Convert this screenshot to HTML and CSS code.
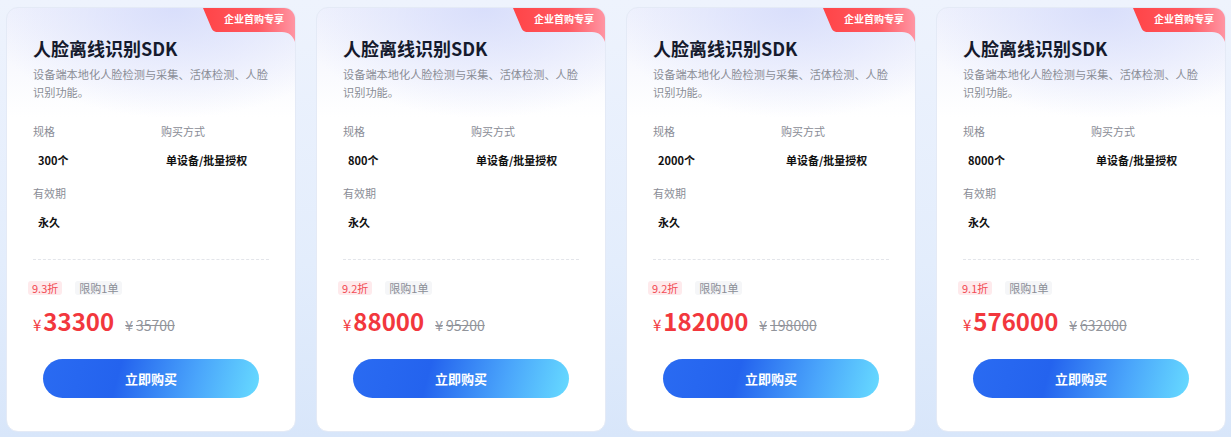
FILE: index.html
```
<!DOCTYPE html>
<html lang="zh-CN">
<head>
    <meta charset="UTF-8">
    <meta name="viewport" content="width=device-width, initial-scale=1.0">
    <title>人脸离线识别SDK</title>
    <link rel="stylesheet" href="styles.css">
</head>
<body>
    <section class="cards">
        <div class="card">
            <div class="badge">
                <svg viewBox="0 0 92 34" width="92" height="34">
                    <defs>
                        <linearGradient id="bg1" x1="0" y1="0" x2="1" y2="0">
                            <stop offset="0" stop-color="#ff4447"/>
                            <stop offset="0.6" stop-color="#ff5a62"/>
                            <stop offset="1" stop-color="#ff95a3"/>
                        </linearGradient>
                    </defs>
                    <path d="M0 0 H92 V34 C90 28 86 24 79 24 H15 C11 24 9 22 8 19 Z" fill="url(#bg1)"/>
                </svg>
                <span>企业首购专享</span>
            </div>
            <h2 class="title">人脸离线识别SDK</h2>
            <p class="desc">设备端本地化人脸检测与采集、活体检测、人脸识别功能。</p>
            <div class="specs">
                <div class="spec"><div class="label">规格</div><div class="value">300个</div></div>
                <div class="spec"><div class="label">购买方式</div><div class="value">单设备/批量授权</div></div>
                <div class="spec"><div class="label">有效期</div><div class="value">永久</div></div>
            </div>
            <div class="line"></div>
            <div class="tags"><span class="tag off">9.3折</span><span class="tag limit">限购1单</span></div>
            <div class="price"><span class="yen">¥</span><span class="num">33300</span><span class="old"><i>¥</i>35700</span></div>
            <a href="#" class="buy">立即购买</a>
        </div>
        <div class="card">
            <div class="badge">
                <svg viewBox="0 0 92 34" width="92" height="34">
                    <defs>
                        <linearGradient id="bg2" x1="0" y1="0" x2="1" y2="0">
                            <stop offset="0" stop-color="#ff4447"/>
                            <stop offset="0.6" stop-color="#ff5a62"/>
                            <stop offset="1" stop-color="#ff95a3"/>
                        </linearGradient>
                    </defs>
                    <path d="M0 0 H92 V34 C90 28 86 24 79 24 H15 C11 24 9 22 8 19 Z" fill="url(#bg2)"/>
                </svg>
                <span>企业首购专享</span>
            </div>
            <h2 class="title">人脸离线识别SDK</h2>
            <p class="desc">设备端本地化人脸检测与采集、活体检测、人脸识别功能。</p>
            <div class="specs">
                <div class="spec"><div class="label">规格</div><div class="value">800个</div></div>
                <div class="spec"><div class="label">购买方式</div><div class="value">单设备/批量授权</div></div>
                <div class="spec"><div class="label">有效期</div><div class="value">永久</div></div>
            </div>
            <div class="line"></div>
            <div class="tags"><span class="tag off">9.2折</span><span class="tag limit">限购1单</span></div>
            <div class="price"><span class="yen">¥</span><span class="num">88000</span><span class="old"><i>¥</i>95200</span></div>
            <a href="#" class="buy">立即购买</a>
        </div>
        <div class="card">
            <div class="badge">
                <svg viewBox="0 0 92 34" width="92" height="34">
                    <defs>
                        <linearGradient id="bg3" x1="0" y1="0" x2="1" y2="0">
                            <stop offset="0" stop-color="#ff4447"/>
                            <stop offset="0.6" stop-color="#ff5a62"/>
                            <stop offset="1" stop-color="#ff95a3"/>
                        </linearGradient>
                    </defs>
                    <path d="M0 0 H92 V34 C90 28 86 24 79 24 H15 C11 24 9 22 8 19 Z" fill="url(#bg3)"/>
                </svg>
                <span>企业首购专享</span>
            </div>
            <h2 class="title">人脸离线识别SDK</h2>
            <p class="desc">设备端本地化人脸检测与采集、活体检测、人脸识别功能。</p>
            <div class="specs">
                <div class="spec"><div class="label">规格</div><div class="value">2000个</div></div>
                <div class="spec"><div class="label">购买方式</div><div class="value">单设备/批量授权</div></div>
                <div class="spec"><div class="label">有效期</div><div class="value">永久</div></div>
            </div>
            <div class="line"></div>
            <div class="tags"><span class="tag off">9.2折</span><span class="tag limit">限购1单</span></div>
            <div class="price"><span class="yen">¥</span><span class="num">182000</span><span class="old"><i>¥</i>198000</span></div>
            <a href="#" class="buy">立即购买</a>
        </div>
        <div class="card">
            <div class="badge">
                <svg viewBox="0 0 92 34" width="92" height="34">
                    <defs>
                        <linearGradient id="bg4" x1="0" y1="0" x2="1" y2="0">
                            <stop offset="0" stop-color="#ff4447"/>
                            <stop offset="0.6" stop-color="#ff5a62"/>
                            <stop offset="1" stop-color="#ff95a3"/>
                        </linearGradient>
                    </defs>
                    <path d="M0 0 H92 V34 C90 28 86 24 79 24 H15 C11 24 9 22 8 19 Z" fill="url(#bg4)"/>
                </svg>
                <span>企业首购专享</span>
            </div>
            <h2 class="title">人脸离线识别SDK</h2>
            <p class="desc">设备端本地化人脸检测与采集、活体检测、人脸识别功能。</p>
            <div class="specs">
                <div class="spec"><div class="label">规格</div><div class="value">8000个</div></div>
                <div class="spec"><div class="label">购买方式</div><div class="value">单设备/批量授权</div></div>
                <div class="spec"><div class="label">有效期</div><div class="value">永久</div></div>
            </div>
            <div class="line"></div>
            <div class="tags"><span class="tag off">9.1折</span><span class="tag limit">限购1单</span></div>
            <div class="price"><span class="yen">¥</span><span class="num">576000</span><span class="old"><i>¥</i>632000</span></div>
            <a href="#" class="buy">立即购买</a>
        </div>
    </section>
</body>
</html>
```
FILE: styles.css
```
body{
    margin: 0px;
    height: 437px;
    overflow: hidden;
    font-family: "Noto Sans CJK SC", "Noto Sans", sans-serif;
    background: linear-gradient(180deg, #eef3fd 0%, #e3edfc 60%, #d8e6fa 100%);
}
a{
    text-decoration: none;
}
.cards{
    display: flex;
    gap: 20px;
    padding: 7px 0 0 6px;
}
.card{
    position: relative;
    flex: none;
    width: 290px;
    height: 425px;
    box-sizing: border-box;
    padding: 28px 26px 0 26px;
    border: 1px solid #e4eaf6;
    border-radius: 12px;
    overflow: hidden;
    background:
        radial-gradient(ellipse 190px 110px at 58% 0, rgba(214,220,251,0.9), rgba(255,255,255,0)),
        linear-gradient(180deg, #f1f3fd 0, #fff 110px);
}
.badge{
    position: absolute;
    top: 0;
    right: 0;
    width: 92px;
    height: 34px;
}
.badge svg{
    display: block;
}
.badge span{
    position: absolute;
    top: 0;
    left: 14px;
    right: 4px;
    line-height: 22px;
    text-align: center;
    color: #fff;
    font-size: 10px;
    font-weight: 700;
}
.title{
    margin: 0;
    font-size: 18px;
    line-height: 24px;
    font-weight: 700;
    color: #151a2d;
}
.desc{
    margin: 5px 0 0;
    width: 240px;
    font-size: 11.2px;
    line-height: 18px;
    color: #8a8d96;
}
.specs{
    display: grid;
    grid-template-columns: 128px 1fr;
    row-gap: 17px;
    margin-top: 22px;
}
.label{
    font-size: 11px;
    line-height: 16px;
    color: #8a8d96;
}
.value{
    margin-top: 13px;
    padding-left: 5px;
    font-size: 11px;
    line-height: 16px;
    font-weight: 700;
    color: #111;
}
.line{
    margin-top: 29px;
    border-top: 1px dashed #e3e5ea;
}
.tags{
    display: flex;
    gap: 13px;
    margin: 21px 0 0 -5px;
}
.tag{
    padding: 0 4px;
    font-size: 11px;
    line-height: 14px;
    border-radius: 3px;
}
.off{
    background: #feeaec;
    color: #f24c55;
}
.limit{
    background: #f5f6f8;
    color: #8a8d96;
}
.price{
    display: flex;
    align-items: baseline;
    margin-top: 11px;
    height: 30px;
    line-height: 30px;
    color: #f2373d;
}
.yen{
    font-size: 15px;
    margin-right: 2px;
}
.num{
    font-size: 24px;
    font-weight: 700;
}
.old{
    margin-left: 11px;
    font-size: 14px;
    color: #91949b;
    text-decoration: line-through;
}
.old i{
    font-style: normal;
    margin-right: 3px;
}
.buy{
    display: block;
    width: 216px;
    height: 39px;
    margin: 23px auto 0;
    border-radius: 20px;
    background: linear-gradient(105deg, #2a6bf2 0%, #2463ee 35%, #4aa5fb 70%, #67dbff 100%);
    color: #fff;
    font-size: 13px;
    font-weight: 700;
    line-height: 39px;
    text-align: center;
}
```
